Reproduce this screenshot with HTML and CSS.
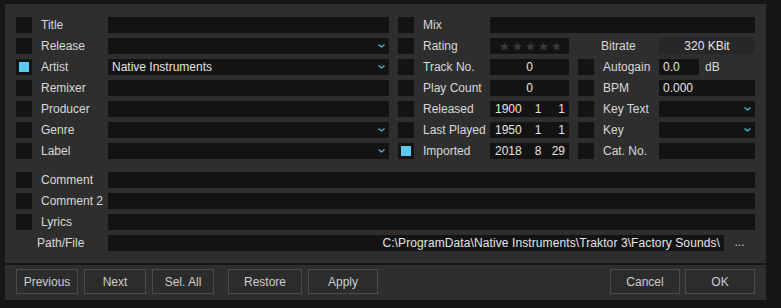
FILE: index.html
```html
<!DOCTYPE html>
<html lang="en">
<head>
    <meta charset="UTF-8">
    <title>Edit Track</title>
    <link rel="stylesheet" href="styles.css">
</head>
<body>
    <div class="dialog">
        <div class="fields">
            <div class="grid">
                <!-- row 1 -->
                <span class="cb"></span><span class="lbl">Title</span><span class="field"></span>
                <span class="cb"></span><span class="lbl">Mix</span><span class="field span-right"></span>

                <!-- row 2 -->
                <span class="cb"></span><span class="lbl">Release</span><span class="field select"><span class="chev"></span></span>
                <span class="cb"></span><span class="lbl">Rating</span>
                <span class="field stars">
                    <svg width="61" height="9" viewBox="0 0 61 9">
                        <g fill="#3b3b3b">
                            <polygon points="4.5,0 5.6,3.2 9,3.3 6.3,5.4 7.3,8.8 4.5,6.8 1.7,8.8 2.7,5.4 0,3.3 3.4,3.2"/>
                            <polygon transform="translate(13 0)" points="4.5,0 5.6,3.2 9,3.3 6.3,5.4 7.3,8.8 4.5,6.8 1.7,8.8 2.7,5.4 0,3.3 3.4,3.2"/>
                            <polygon transform="translate(26 0)" points="4.5,0 5.6,3.2 9,3.3 6.3,5.4 7.3,8.8 4.5,6.8 1.7,8.8 2.7,5.4 0,3.3 3.4,3.2"/>
                            <polygon transform="translate(39 0)" points="4.5,0 5.6,3.2 9,3.3 6.3,5.4 7.3,8.8 4.5,6.8 1.7,8.8 2.7,5.4 0,3.3 3.4,3.2"/>
                            <polygon transform="translate(52 0)" points="4.5,0 5.6,3.2 9,3.3 6.3,5.4 7.3,8.8 4.5,6.8 1.7,8.8 2.7,5.4 0,3.3 3.4,3.2"/>
                        </g>
                    </svg>
                </span>
                <span></span><span class="lbl bitrate-lbl">Bitrate</span><span class="field readonly center">320 KBit</span>

                <!-- row 3 -->
                <span class="cb on"></span><span class="lbl">Artist</span><span class="field select">Native Instruments<span class="chev"></span></span>
                <span class="cb"></span><span class="lbl">Track No.</span><span class="field center">0</span>
                <span class="cb"></span><span class="lbl">Autogain</span>
                <span class="gain"><span class="field small">0.0</span><span class="unit">dB</span></span>

                <!-- row 4 -->
                <span class="cb"></span><span class="lbl">Remixer</span><span class="field"></span>
                <span class="cb"></span><span class="lbl">Play Count</span><span class="field center">0</span>
                <span class="cb"></span><span class="lbl">BPM</span><span class="field">0.000</span>

                <!-- row 5 -->
                <span class="cb"></span><span class="lbl">Producer</span><span class="field"></span>
                <span class="cb"></span><span class="lbl">Released</span>
                <span class="field date"><span class="y">1900</span><span class="m">1</span><span class="d">1</span></span>
                <span class="cb"></span><span class="lbl">Key Text</span><span class="field select"><span class="chev"></span></span>

                <!-- row 6 -->
                <span class="cb"></span><span class="lbl">Genre</span><span class="field select"><span class="chev"></span></span>
                <span class="cb"></span><span class="lbl">Last Played</span>
                <span class="field date"><span class="y">1950</span><span class="m">1</span><span class="d">1</span></span>
                <span class="cb"></span><span class="lbl">Key</span><span class="field select"><span class="chev"></span></span>

                <!-- row 7 -->
                <span class="cb"></span><span class="lbl">Label</span><span class="field select"><span class="chev"></span></span>
                <span class="cb on"></span><span class="lbl">Imported</span>
                <span class="field date"><span class="y">2018</span><span class="m">8</span><span class="d">29</span></span>
                <span class="cb"></span><span class="lbl">Cat. No.</span><span class="field"></span>
            </div>

            <div class="grid lower">
                <span class="cb"></span><span class="lbl">Comment</span><span class="field span-wide"></span>
                <span class="cb"></span><span class="lbl">Comment 2</span><span class="field span-wide"></span>
                <span class="cb"></span><span class="lbl">Lyrics</span><span class="field span-wide"></span>

                <span class="lbl path-lbl">Path/File</span>
                <span class="path span-wide">
                    <span class="field path-field">C:\ProgramData\Native Instruments\Traktor 3\Factory Sounds\</span>
                    <span class="dots">...</span>
                </span>
            </div>
        </div>

        <div class="buttons">
            <button class="btn">Previous</button>
            <button class="btn">Next</button>
            <button class="btn">Sel. All</button>
            <button class="btn wide gap">Restore</button>
            <button class="btn mid">Apply</button>
            <span class="fill"></span>
            <button class="btn mid">Cancel</button>
            <button class="btn mid">OK</button>
        </div>
    </div>
</body>
</html>
```

FILE: styles.css
```css
body {
    margin: 0;
    padding: 0;
    background-color: #161616;
    font-family: 'Liberation Sans', Arial, sans-serif;
    font-size: 12px;
    color: #d4d4d4;
}
.dialog {
    width: 761px;
    height: 296px;
    margin: 4px 0 0 5px;
    background-color: #2e2e2e;
    display: flex;
    flex-direction: column;
}
.fields {
    padding: 13px 11px 12px 11px;
    border-bottom: 2px solid #151515;
}
.grid {
    display: grid;
    grid-template-columns: 16px 58px 281px 16px 58px 79px 16px 47px 96px;
    grid-auto-rows: 16px;
    column-gap: 9px;
    row-gap: 5px;
}
.grid.lower {
    margin-top: 13px;
}
.cb {
    width: 16px;
    height: 16px;
    background-color: #141414;
    display: flex;
    align-items: center;
    justify-content: center;
}
.cb.on::after {
    content: '';
    width: 10px;
    height: 10px;
    background-color: #5bc9f1;
}
.lbl {
    line-height: 16px;
    white-space: nowrap;
    color: #d8d8d8;
}
.bitrate-lbl {
    margin-left: -2px;
}
.path-lbl {
    grid-column: 1 / 3;
    padding-left: 21px;
}
.field {
    background-color: #131313;
    height: 16px;
    line-height: 16px;
    padding: 0 4px;
    white-space: nowrap;
    overflow: hidden;
    color: #e4e4e4;
    display: flex;
    align-items: center;
    box-sizing: border-box;
}
.field.center {
    justify-content: center;
}
.field.readonly {
    background-color: #272727;
}
.span-right {
    grid-column: 6 / 10;
}
.span-wide {
    grid-column: 3 / 10;
}
.select {
    position: relative;
}
.chev {
    position: absolute;
    right: 4px;
    top: 6px;
    width: 7px;
    height: 4px;
    background: no-repeat center / 7px 4px;
    background-image: url("data:image/svg+xml;utf8,<svg xmlns='http://www.w3.org/2000/svg' width='7' height='4' viewBox='0 0 7 4'><polyline points='0.5,0.5 3.5,3 6.5,0.5' fill='none' stroke='%234bb8dc' stroke-width='1.3'/></svg>");
}
.stars {
    justify-content: center;
    padding-left: 5px;
}
.stars svg {
    display: block;
}
.date .y {
    flex: 1;
    padding-left: 1px;
}
.date .m {
    width: 20px;
    text-align: right;
}
.date .d {
    width: 24px;
    text-align: right;
}
.gain {
    display: flex;
    align-items: center;
}
.field.small {
    width: 40px;
}
.unit {
    margin-left: 6px;
    color: #d8d8d8;
}
.path {
    display: flex;
}
.path-field {
    flex: 1;
    justify-content: flex-end;
    letter-spacing: 0.1px;
}
.dots {
    width: 31px;
    text-align: center;
    line-height: 14px;
    color: #cfcfcf;
}
.buttons {
    display: flex;
    padding: 4px 11px 0 11px;
    gap: 6px;
}
.btn {
    height: 25px;
    width: 62px;
    background-color: #2c2c2c;
    border: 1px solid #4c4c4c;
    color: #cdcdcd;
    font-family: 'Liberation Sans', Arial, sans-serif;
    font-size: 12px;
    padding: 0;
}
.btn.wide {
    width: 74px;
}
.btn.mid {
    width: 70px;
}
.btn.gap {
    margin-left: 8px;
}
.fill {
    flex: 1;
}
.buttons .btn:last-child {
    margin-left: -1px;
}
```
